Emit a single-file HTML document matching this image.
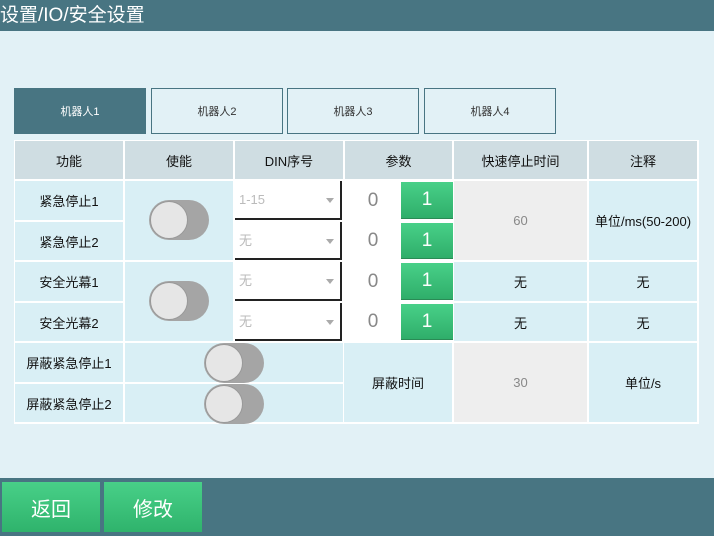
<!DOCTYPE html><html><head><meta charset="utf-8"><style>
*{margin:0;padding:0;box-sizing:border-box}
body{width:714px;height:536px;background:#e2f1f6;position:relative;overflow:hidden;font-family:"Liberation Sans","Noto Sans CJK SC",sans-serif;color:#111}
.a{position:absolute;display:flex;align-items:center;justify-content:center;font-size:13px}
.h{background:#cfdde2}
.c{background:#d9eff5}
.g{background:#eeeeee;color:#888}
.tab{border:1px solid #487582;font-size:11px;color:#333}
.sel{position:absolute;background:#fff;border-right:2px solid #222;border-bottom:2px solid #222;color:#bbb;font-size:13px;padding-left:4px}
.sel::after{content:"";position:absolute;right:6px;top:17px;border:4px solid transparent;border-top:5px solid #aaa}
.z{position:absolute;background:#fff;color:#888;font-size:19px;display:flex;align-items:center;justify-content:center}
.one{position:absolute;background:linear-gradient(#48d088,#2fae6a);color:#fff;font-size:19px;display:flex;align-items:center;justify-content:center;border-bottom:1px solid #2a8a55}
.sw{position:absolute;width:60px;height:40px;border-radius:20px;background:#a5a5a5}
.sw::before{content:"";position:absolute;left:1px;top:1px;width:38px;height:38px;border-radius:50%;background:#e6e6e6;border:1px solid #999;box-sizing:border-box}
.btn{position:absolute;top:482px;width:98px;height:50px;background:linear-gradient(#48d088,#2fb36c);color:#fff;font-size:20px;display:flex;align-items:center;justify-content:center}
</style></head><body>
<div style="position:absolute;left:0;top:0;width:714px;height:31px;background:#487582;color:#fff;font-size:19px;line-height:31px;padding-left:0">设置/IO/安全设置</div>
<div class="a" style="left:14px;top:88px;width:132px;height:46px;background:#487582;color:#fff;font-size:11px">机器人1</div>
<div class="a tab" style="left:151px;top:88px;width:132px;height:46px">机器人2</div>
<div class="a tab" style="left:287px;top:88px;width:132px;height:46px">机器人3</div>
<div class="a tab" style="left:424px;top:88px;width:132px;height:46px">机器人4</div>

<div style="position:absolute;left:14px;top:140px;width:685px;height:284px;background:#fff"></div>

<div class="a h" style="left:15px;top:141px;width:108px;height:38px">功能</div>
<div class="a h" style="left:125px;top:141px;width:108px;height:38px">使能</div>
<div class="a h" style="left:235px;top:141px;width:108px;height:38px">DIN序号</div>
<div class="a h" style="left:345px;top:141px;width:107px;height:38px">参数</div>
<div class="a h" style="left:454px;top:141px;width:133px;height:38px">快速停止时间</div>
<div class="a h" style="left:589px;top:141px;width:108px;height:38px">注释</div>

<div class="a c" style="left:15px;top:181px;width:108px;height:39px">紧急停止1</div>
<div class="a c" style="left:15px;top:222px;width:108px;height:38px">紧急停止2</div>
<div class="a c" style="left:15px;top:262px;width:108px;height:39px">安全光幕1</div>
<div class="a c" style="left:15px;top:303px;width:108px;height:38px">安全光幕2</div>
<div class="a c" style="left:15px;top:343px;width:108px;height:39px">屏蔽紧急停止1</div>
<div class="a c" style="left:15px;top:384px;width:108px;height:38px">屏蔽紧急停止2</div>

<div class="a c" style="left:125px;top:181px;width:108px;height:79px"></div>
<div class="a c" style="left:125px;top:262px;width:108px;height:79px"></div>
<div class="a c" style="left:125px;top:343px;width:218px;height:39px"></div>
<div class="a c" style="left:125px;top:384px;width:218px;height:38px"></div>
<div class="sw" style="left:149px;top:200px"></div>
<div class="sw" style="left:149px;top:281px"></div>
<div class="sw" style="left:204px;top:343px"></div>
<div class="sw" style="left:204px;top:384px"></div>

<div class="sel" style="left:235px;top:181px;width:107px;height:39px;line-height:38px">1-15</div>
<div class="sel" style="left:235px;top:222px;width:107px;height:38px;line-height:38px">无</div>
<div class="sel" style="left:235px;top:262px;width:107px;height:39px;line-height:38px">无</div>
<div class="sel" style="left:235px;top:303px;width:107px;height:38px;line-height:38px">无</div>

<div class="z" style="left:345px;top:181px;width:56px;height:39px">0</div><div class="one" style="left:401px;top:182px;width:52px;height:37px">1</div>
<div class="z" style="left:345px;top:222px;width:56px;height:38px">0</div><div class="one" style="left:401px;top:223px;width:52px;height:36px">1</div>
<div class="z" style="left:345px;top:262px;width:56px;height:39px">0</div><div class="one" style="left:401px;top:263px;width:52px;height:37px">1</div>
<div class="z" style="left:345px;top:303px;width:56px;height:38px">0</div><div class="one" style="left:401px;top:304px;width:52px;height:36px">1</div>
<div class="a c" style="left:344px;top:343px;width:108px;height:79px">屏蔽时间</div>

<div class="a g" style="left:454px;top:181px;width:133px;height:79px">60</div>
<div class="a c" style="left:454px;top:262px;width:133px;height:39px">无</div>
<div class="a c" style="left:454px;top:303px;width:133px;height:38px">无</div>
<div class="a g" style="left:454px;top:343px;width:133px;height:79px">30</div>
<div class="a c" style="left:589px;top:181px;width:108px;height:79px">单位/ms(50-200)</div>
<div class="a c" style="left:589px;top:262px;width:108px;height:39px">无</div>
<div class="a c" style="left:589px;top:303px;width:108px;height:38px">无</div>
<div class="a c" style="left:589px;top:343px;width:108px;height:79px">单位/s</div>

<div style="position:absolute;left:0;top:478px;width:714px;height:58px;background:#487582"></div>
<div class="btn" style="left:2px">返回</div>
<div class="btn" style="left:104px">修改</div>
</body></html>
